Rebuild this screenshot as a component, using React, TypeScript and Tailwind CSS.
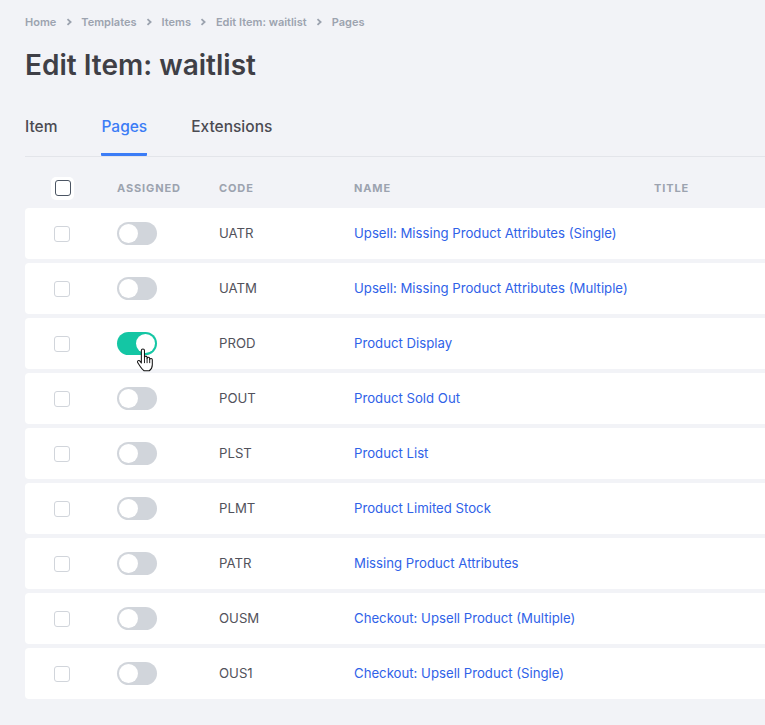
import React from "react";

type PageRow = {
  code: string;
  name: string;
  assigned?: boolean;
};

const rows: PageRow[] = [
  { code: "UATR", name: "Upsell: Missing Product Attributes (Single)" },
  { code: "UATM", name: "Upsell: Missing Product Attributes (Multiple)" },
  { code: "PROD", name: "Product Display", assigned: true },
  { code: "POUT", name: "Product Sold Out" },
  { code: "PLST", name: "Product List" },
  { code: "PLMT", name: "Product Limited Stock" },
  { code: "PATR", name: "Missing Product Attributes" },
  { code: "OUSM", name: "Checkout: Upsell Product (Multiple)" },
  { code: "OUS1", name: "Checkout: Upsell Product (Single)" },
];

const crumbs = ["Home", "Templates", "Items", "Edit Item: waitlist", "Pages"];

const Crumb: React.FC = () => (
  <svg width="6" height="8" viewBox="0 0 6 8" className="mx-[9.5px]">
    <path d="M1.5 1.2 L4.6 4 L1.5 6.8" fill="none" stroke="#9ca3af" strokeWidth="1.8" />
  </svg>
);

const HandCursor: React.FC = () => (
  <svg
    width="18"
    height="24"
    viewBox="0 0 17 23"
    className="absolute left-[19px] top-[16px] pointer-events-none"
  >
    <path
      d="M5 2.5C5 1.5 5.7 1 6.5 1C7.3 1 8 1.5 8 2.5V9C8 8.2 8.6 7.8 9.3 7.8C10 7.8 10.5 8.3 10.5 9V10C10.5 9.3 11.1 8.9 11.8 8.9C12.5 8.9 13 9.4 13 10V11C13 10.4 13.6 10 14.3 10C15 10 15.5 10.5 15.5 11.2V16C15.5 18.8 14.3 20.6 12.6 21.8H7.6C6.2 20.9 5.1 19.5 4.1 18L1.6 14.1C1.1 13.3 1.3 12.5 2 12.1C2.7 11.8 3.4 12.1 3.9 12.8L5 14.4Z"
      fill="#fff"
      stroke="#111"
      strokeWidth="1"
      strokeLinejoin="round"
    />
    <path d="M8 9.5V14.5M10.5 10V14.5M13 11V14.5" stroke="#111" strokeWidth="0.9" />
  </svg>
);

const Toggle: React.FC<{ on?: boolean }> = ({ on }) => (
  <div
    className={`relative w-[40px] h-[23px] rounded-full ${on ? "bg-[#14c6a4]" : "bg-[#d1d5db]"}`}
  >
    <div
      className={`absolute top-[2px] w-[19px] h-[19px] rounded-full bg-white ${on ? "left-[19px]" : "left-[2px]"}`}
    />
    {on && <HandCursor />}
  </div>
);

const App: React.FC = () => {
  return (
    <div
      className="min-h-screen w-full overflow-hidden bg-[#f2f3f7] pl-[25px] pt-[15px]"
      style={{ fontFamily: "Inter, 'Liberation Sans', sans-serif" }}
    >
      {/* Breadcrumb */}
      <nav className="flex items-center h-[14px] text-[11px] font-semibold text-[#9ca3af]">
        {crumbs.map((c, i) => (
          <React.Fragment key={c}>
            {i > 0 && <Crumb />}
            <span>{c}</span>
          </React.Fragment>
        ))}
      </nav>

      <h1 className="mt-[18px] h-[36px] leading-[36px] text-[28px] font-semibold text-[#3f3f46]">
        Edit Item: waitlist
      </h1>

      {/* Tabs */}
      <div className="mt-[34px] flex gap-[44px] border-b border-[#e3e5ea] text-[15.5px] font-medium">
        <div className="pb-[16px] border-b-[3px] border-transparent leading-[20px] text-[#4b4b52]">
          Item
        </div>
        <div className="pb-[16px] border-b-[3px] border-[#3b7cf6] rounded-[1px] leading-[20px] text-[#3b7cf6]">
          Pages
        </div>
        <div className="pb-[16px] border-b-[3px] border-transparent leading-[20px] text-[#4b4b52]">
          Extensions
        </div>
      </div>

      {/* Header */}
      <div className="mt-[11px] h-[40px] grid grid-cols-[92px_102px_135px_300px_1fr] items-center text-[11px] font-bold uppercase tracking-[0.08em] text-[#9ca3af]">
        <div className="pl-[26px]">
          <div className="w-[23px] h-[23px] rounded-[5px] bg-white flex items-center justify-center">
            <div className="w-[16px] h-[16px] rounded-[3px] border-[1.5px] border-[#4b5563] bg-white" />
          </div>
        </div>
        <div>Assigned</div>
        <div>Code</div>
        <div>Name</div>
        <div>Title</div>
      </div>

      {/* Rows */}
      <div className="flex flex-col gap-[4px]">
        {rows.map((r) => (
          <div
            key={r.code}
            className="h-[51px] rounded-l-[4px] bg-white grid grid-cols-[92px_102px_135px_300px_1fr] items-center text-[13.2px]"
          >
            <div className="pl-[29px]">
              <div className="w-[16px] h-[16px] rounded-[3px] border border-[#d1d5db] bg-white" />
            </div>
            <div>
              <Toggle on={r.assigned} />
            </div>
            <div className="text-[#52525b]">{r.code}</div>
            <div className="col-span-2 text-[#2f62e8] whitespace-nowrap">{r.name}</div>
          </div>
        ))}
      </div>
    </div>
  );
};

export default App;
